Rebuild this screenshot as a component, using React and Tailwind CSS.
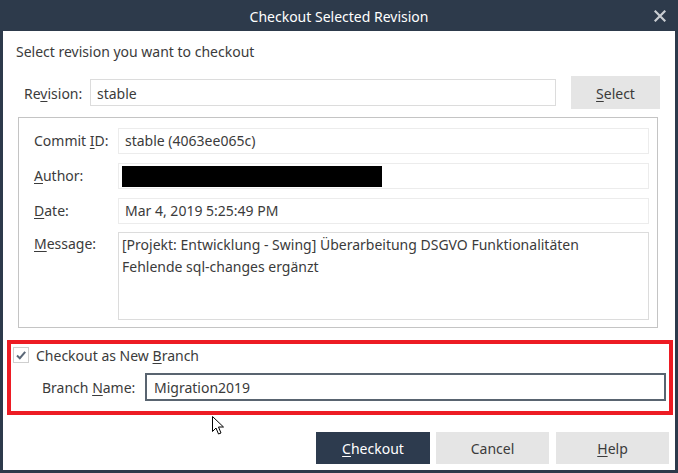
import React from "react";

const U = ({ children }) => <span className="underline underline-offset-2">{children}</span>;

export default function App() {
  return (
    <div
      className="relative w-[678px] h-[473px] bg-[#2d3a4b] flex flex-col px-[3px] pb-[3px] text-[#3b3b3b]"
      style={{ fontFamily: '"Noto Sans", "Open Sans", sans-serif' }}
    >
      {/* Title bar */}
      <div className="relative h-[31px] flex items-center justify-center text-white text-[14px] pt-[2px]">
        <span>Checkout Selected Revision</span>
        <svg className="absolute right-[9px] top-[10px]" width="12" height="12" viewBox="0 0 12 12">
          <path d="M1.5 1.5 L10.5 10.5 M10.5 1.5 L1.5 10.5" stroke="#c9cdd2" strokeWidth="2.2" strokeLinecap="square" />
        </svg>
      </div>

      {/* Body */}
      <div className="flex-1 bg-white flex flex-col text-[14px]">
        <div className="mt-[10px] h-[20px] pl-[13px] flex items-center">Select revision you want to checkout</div>

        {/* Revision row */}
        <div className="mt-[15px] h-[33px] flex items-center">
          <div className="ml-[21px] w-[66px] pt-[1px]">
            Re<U>v</U>ision:
          </div>
          <div className="w-[466px] h-[27px] border border-[#dcdcdc] flex items-center pl-[6px] pt-[1px]">stable</div>
          <div className="ml-[15px] w-[89px] h-[33px] bg-[#e5e5e5] flex items-center justify-center pt-[1px]">
            <span><U>S</U>elect</span>
          </div>
        </div>

        {/* Group box */}
        <div className="mt-[8px] ml-[15px] w-[640px] h-[211px] border border-[#c4c4c4] flex flex-col gap-[9px] pt-[9px]">
          {[
            { label: <>Commit <U>I</U>D:</>, value: "stable (4063ee065c)" },
            { label: <><U>A</U>uthor:</>, value: null },
            { label: <><U>D</U>ate:</>, value: "Mar 4, 2019 5:25:49 PM" },
          ].map((r, i) => (
            <div key={i} className="flex items-center h-[26px] pt-[1px]">
              <div className="w-[99px] pl-[15px]">{r.label}</div>
              <div className="w-[531px] h-[26px] border border-[#ececec] flex items-center pl-[6px]">
                {r.value === null ? <div className="w-[260px] h-[21px] bg-black -ml-[3px] mt-[1px]" /> : r.value}
              </div>
            </div>
          ))}
          <div className="flex items-start h-[88px]">
            <div className="w-[99px] pl-[15px] pt-[1px]">
              <U>M</U>essage:
            </div>
            <div className="w-[531px] h-[88px] border border-[#dcdcdc] pl-[3px] pt-[1px] leading-[22px]">
              [Projekt: Entwicklung - Swing] Überarbeitung DSGVO Funktionalitäten
              <br />
              Fehlende sql-changes ergänzt
            </div>
          </div>
        </div>

        {/* Red highlighted area */}
        <div className="mt-[12px] ml-[4px] w-[666px] h-[75px] border-[4px] border-[#ed1c24] flex flex-col">
          <div className="mt-[3px] ml-[2px] h-[16px] flex items-center">
            <div className="w-[16px] h-[16px] border border-[#cfcfcf] bg-white flex items-center justify-center">
              <svg width="12" height="12" viewBox="0 0 12 12">
                <path d="M2 6.5 L4.8 9.2 L10.2 2.8" fill="none" stroke="#5b6878" strokeWidth="2" />
              </svg>
            </div>
            <span className="ml-[7px] pt-[1px]">
              Checkout as New <U>B</U>ranch
            </span>
          </div>
          <div className="mt-[10px] flex items-center h-[28px]">
            <div className="ml-[31px] w-[103px] pt-[1px]">
              Branch <U>N</U>ame:
            </div>
            <div className="w-[521px] h-[28px] border-2 border-[#596470] flex items-center pl-[7px] pt-[1px]">Migration2019</div>
          </div>
        </div>

        {/* Buttons */}
        <div className="mt-[17px] flex justify-end pr-[6px]">
          <div className="w-[114px] h-[32px] bg-[#2d3b4e] text-white flex items-center justify-center pt-[1px]">
            <span><U>C</U>heckout</span>
          </div>
          <div className="ml-[6px] w-[113px] h-[32px] bg-[#e5e5e5] flex items-center justify-center pt-[1px]">Cancel</div>
          <div className="ml-[7px] w-[113px] h-[32px] bg-[#e5e5e5] flex items-center justify-center pt-[1px]">
            <span><U>H</U>elp</span>
          </div>
        </div>
      </div>

      {/* Mouse cursor overlay */}
      <svg className="absolute left-[212px] top-[416px]" width="14" height="20" viewBox="0 0 14 20">
        <path d="M0.5 0.5 L0.5 15.5 L4 12 L6.5 18 L9 17 L6.5 11 L11.5 11 Z" fill="white" stroke="black" strokeWidth="1" strokeLinejoin="miter" />
      </svg>
    </div>
  );
}
